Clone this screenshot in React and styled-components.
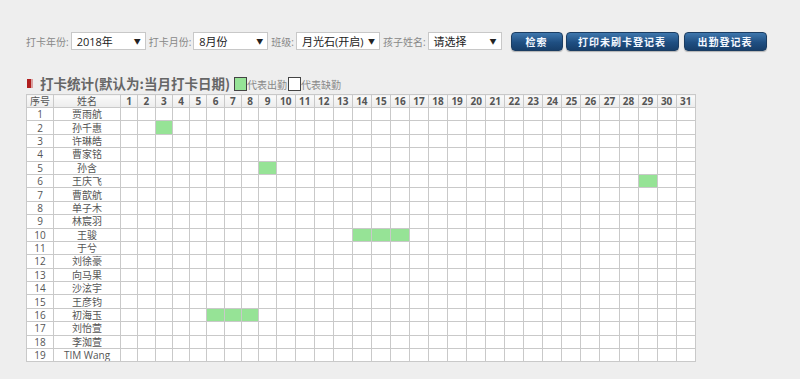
import React from "react";
import styled, { createGlobalStyle } from "styled-components";

const GlobalStyle = createGlobalStyle`
  html, body {
    margin: 0;
    padding: 0;
    background: #eeeeee;
    font-family: "Open Sans", "Noto Sans CJK SC", sans-serif;
  }
`;

const students = [
  "贾雨航", "孙千惠", "许琳皓", "曹家铭", "孙含", "王庆飞", "曹歆航", "单子木",
  "林宸羽", "王骏", "于兮", "刘徐豪", "向马果", "沙泫宇", "王彦钧", "初海玉",
  "刘怡萱", "李洳萱", "TIM Wang",
];

// row index (1-based) -> days checked in
const attendance = {
  2: [3],
  5: [9],
  6: [29],
  10: [14, 15, 16],
  16: [6, 7, 8],
};

const days = Array.from({ length: 31 }, (_, i) => i + 1);

const App = () => {
  return (
    <Page>
      <GlobalStyle />
      <Toolbar>
        <Label>打卡年份:</Label>
        <Select width={75}>
          <span>2018年</span>
          <Caret>▼</Caret>
        </Select>
        <Label>打卡月份:</Label>
        <Select width={75}>
          <span>8月份</span>
          <Caret>▼</Caret>
        </Select>
        <Label>班级:</Label>
        <Select width={84}>
          <span>月光石(开启)</span>
          <Caret>▼</Caret>
        </Select>
        <Label>孩子姓名:</Label>
        <Select width={74}>
          <span>请选择</span>
          <Caret>▼</Caret>
        </Select>
        <Button width={52} gap={6}>检索</Button>
        <Button width={113}>打印未刷卡登记表</Button>
        <Button width={83} gap={5}>出勤登记表</Button>
      </Toolbar>

      <TitleRow>
        <Marker />
        <Title>打卡统计(默认为:当月打卡日期)</Title>
        <Legend>
          <Swatch present />
          代表出勤
        </Legend>
        <Legend>
          <Swatch />
          代表缺勤
        </Legend>
      </TitleRow>

      <Table>
        <colgroup>
          <col style={{ width: 27 }} />
          <col style={{ width: 67 }} />
          {days.map((d) => (
            <col key={d} style={{ width: d < 10 ? 17.3 : 19.05 }} />
          ))}
        </colgroup>
        <thead>
          <tr>
            <Th>序号</Th>
            <Th>姓名</Th>
            {days.map((d) => (
              <Th key={d} bold>
                {d}
              </Th>
            ))}
          </tr>
        </thead>
        <tbody>
          {students.map((name, i) => {
            const marked = attendance[i + 1] || [];
            return (
              <tr key={name}>
                <Td>{i + 1}</Td>
                <Td>{name}</Td>
                {days.map((d) => (
                  <Td key={d} present={marked.includes(d)} />
                ))}
              </tr>
            );
          })}
        </tbody>
      </Table>
    </Page>
  );
};

const Page = styled.div`
  width: 800px;
  height: 379px;
  padding: 31px 0 0 26px;
  box-sizing: border-box;
  overflow: hidden;
`;

const Toolbar = styled.div`
  display: flex;
  align-items: center;
  height: 20px;
`;

const Label = styled.span`
  font-size: 10px;
  color: #888;
  margin-right: 2px;
  white-space: nowrap;
`;

const Select = styled.div`
  display: flex;
  align-items: center;
  justify-content: space-between;
  width: ${(p) => p.width}px;
  height: 18px;
  box-sizing: border-box;
  border: 1px solid #c8c8c8;
  background: #fff;
  padding: 0 4px 0 5px;
  font-size: 11px;
  color: #222;
  margin-right: 3px;
  white-space: nowrap;
`;

const Caret = styled.span`
  font-size: 7px;
  color: #222;
`;

const Button = styled.button`
  width: ${(p) => p.width}px;
  height: 19px;
  margin-left: ${(p) => p.gap || 3}px;
  border: 1px solid #1b3d62;
  border-radius: 4px;
  background: linear-gradient(#3f77ad, #1f4f82 55%, #173f6b);
  color: #f4f8ff;
  font-family: "Noto Sans CJK SC", sans-serif;
  font-size: 10px;
  font-weight: bold;
  letter-spacing: 1px;
  padding: 0;
  box-shadow: 0 1px 1px rgba(0, 0, 0, 0.25);
  cursor: pointer;
`;

const TitleRow = styled.div`
  display: flex;
  align-items: flex-end;
  margin-top: 24px;
  height: 16px;
  margin-bottom: 3px;
  padding-left: 1px;
`;

const Marker = styled.span`
  width: 6px;
  height: 9px;
  background: linear-gradient(90deg, #b01e1e 0 4px, #d9a0a0 4px 6px);
  margin: 0 7px 3px 0;
`;

const Title = styled.span`
  font-family: "Noto Sans CJK SC", sans-serif;
  font-size: 13.5px;
  font-weight: bold;
  color: #666;
  line-height: 16px;
  margin-right: 4px;
  white-space: nowrap;
`;

const Legend = styled.span`
  display: flex;
  align-items: flex-end;
  font-size: 10px;
  color: #888;
  font-family: "Noto Sans CJK SC", sans-serif;
  line-height: 12px;
  margin-right: 1px;
`;

const Swatch = styled.span`
  width: 11px;
  height: 12px;
  border: 1px solid #444;
  background: ${(p) => (p.present ? "#96e396" : "#fff")};
`;

const Table = styled.table`
  table-layout: fixed;
  border-collapse: collapse;
  width: 669px;
  background: #fff;
  font-size: 10px;
  color: #555;
`;

const Th = styled.th`
  height: 12px;
  padding: 0;
  border: 1px solid #c9c9c9;
  background: linear-gradient(#fafafa, #ececec);
  font-weight: ${(p) => (p.bold ? "bold" : "normal")};
  color: #555;
  text-align: center;
  line-height: 12px;
  font-family: "Open Sans", "Noto Sans CJK SC", sans-serif;
`;

const Td = styled.td`
  height: 12.4px;
  padding: 0;
  border: 1px solid #c9c9c9;
  background: ${(p) => (p.present ? "#96e396" : "#fff")};
  text-align: center;
  line-height: 12px;
  font-family: "Open Sans", "Noto Sans CJK SC", sans-serif;
  white-space: nowrap;
  overflow: hidden;
`;

export default App;
